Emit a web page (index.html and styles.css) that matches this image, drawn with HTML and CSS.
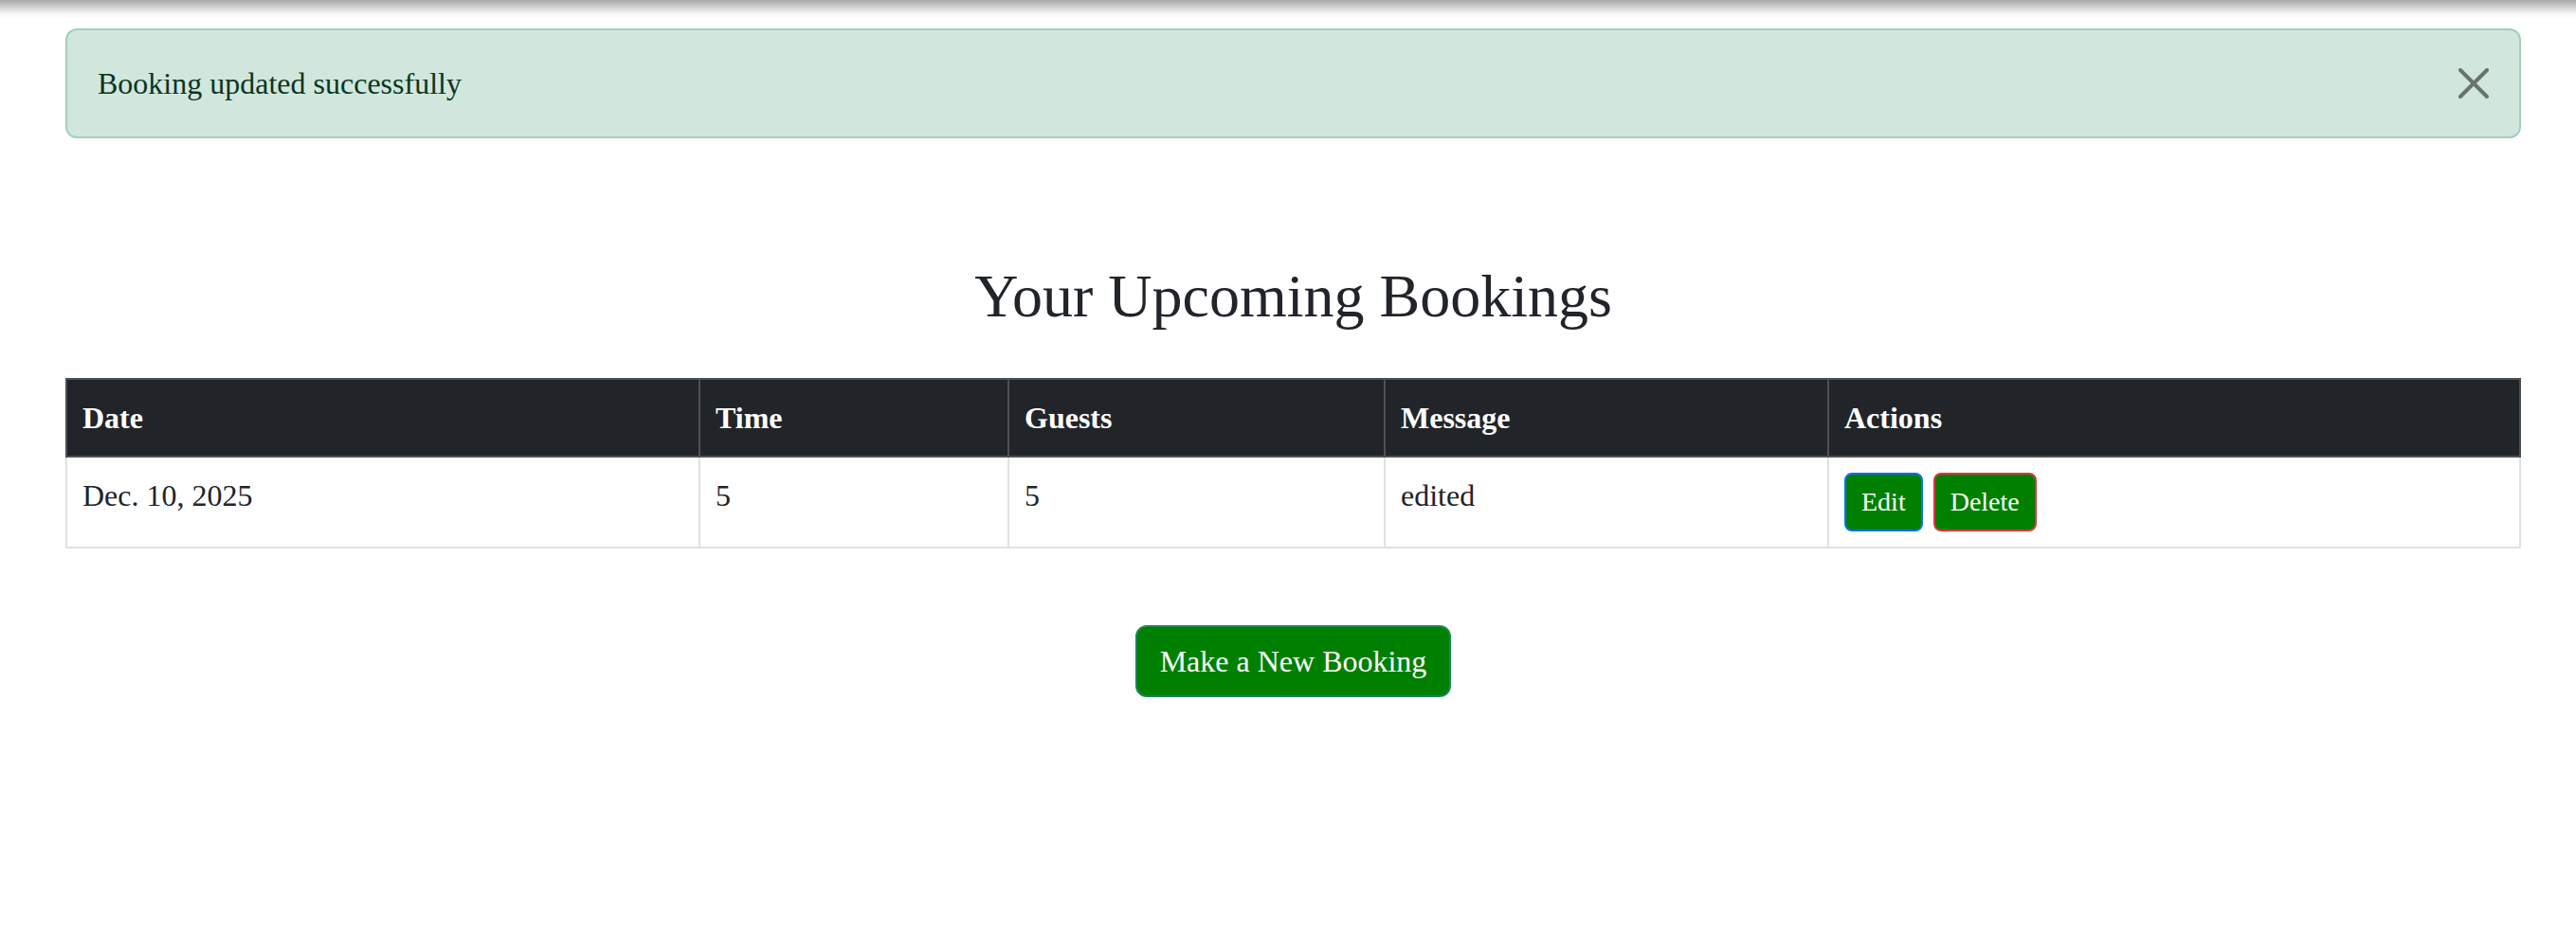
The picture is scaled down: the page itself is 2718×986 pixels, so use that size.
FILE: index.html
```html
<!DOCTYPE html>
<html lang="en">
<head>
<meta charset="utf-8">
<title>Your Upcoming Bookings</title>
<link rel="stylesheet" href="styles.css">
</head>
<body>
<main class="page">
  <div class="alert">
    <span class="alert-text">Booking updated successfully</span>
    <button class="btn-close" type="button" aria-label="Close">
      <svg viewBox="0 0 16 16" width="32" height="32"><path d="M1 1L15 15M15 1L1 15" stroke="currentColor" stroke-width="2" stroke-linecap="round" fill="none"/></svg>
    </button>
  </div>

  <h2 class="title">Your Upcoming Bookings</h2>

  <table class="bookings">
    <thead>
      <tr>
        <th class="col-date">Date</th>
        <th class="col-time">Time</th>
        <th class="col-guests">Guests</th>
        <th class="col-msg">Message</th>
        <th class="col-actions">Actions</th>
      </tr>
    </thead>
    <tbody>
      <tr>
        <td>Dec. 10, 2025</td>
        <td>5</td>
        <td>5</td>
        <td>edited</td>
        <td>
          <div class="actions">
            <a class="btn-sm btn-edit" href="#">Edit</a>
            <a class="btn-sm btn-delete" href="#">Delete</a>
          </div>
        </td>
      </tr>
    </tbody>
  </table>

  <div class="new-wrap">
    <a class="btn-new" href="#">Make a New Booking</a>
  </div>
</main>
</body>
</html>
```
FILE: styles.css
```css
html, body {
  margin: 0;
  padding: 0;
}
body {
  background: #fff linear-gradient(#a9a9a9, #f4f4f4 14px, #fff 20px) no-repeat top left / 100% 20px;
  font-family: "Liberation Serif", "Times New Roman", serif;
  color: #212529;
  min-height: 986px;
}
.page {
  padding: 30px 58px 0 69px;
}
.alert {
  position: relative;
  background: #d1e7dd;
  border: 2px solid #a3cfbb;
  border-radius: 12px;
  color: #0a3622;
  font-size: 32px;
  line-height: 48px;
  padding: 32px 96px 32px 32px;
}
.btn-close {
  position: absolute;
  top: 0;
  right: 0;
  width: 96px;
  height: 112px;
  padding: 40px 32px;
  border: 0;
  background: transparent;
  color: rgba(0, 0, 0, 0.5);
  display: flex;
  align-items: center;
  justify-content: center;
  box-sizing: border-box;
}
.btn-close svg {
  display: block;
  flex: none;
}
.title {
  margin: 129px 0 47px;
  font-size: 64px;
  font-weight: 500;
  line-height: 1.2;
  text-align: center;
}
.bookings {
  width: 100%;
  border-collapse: collapse;
  font-size: 32px;
  line-height: 48px;
  vertical-align: top;
  border: 2px solid #dee2e6;
}
.bookings th,
.bookings td {
  text-align: left;
  vertical-align: top;
  padding: 16px;
}
.bookings th {
  background: #212529;
  color: #fff;
  font-weight: bold;
  border: 2px solid #4d5154;
}
.bookings td {
  border: 2px solid #dee2e6;
  background: #fff;
}
.col-date { width: 634px; }
.col-time { width: 292px; }
.col-guests { width: 363px; }
.col-msg { width: 434px; }
.actions {
  display: flex;
  gap: 11px;
}
.btn-sm {
  display: block;
  background: #008000;
  color: #fff;
  text-decoration: none;
  font-size: 28px;
  line-height: 42px;
  padding: 8px 16px;
  border: 2px solid;
  border-radius: 8px;
}
.btn-edit { border-color: #0d6efd; }
.btn-delete { border-color: #dc3545; }
.new-wrap {
  display: flex;
  justify-content: center;
  margin-top: 81px;
}
.btn-new {
  display: block;
  background: #008000;
  color: #fff;
  text-decoration: none;
  font-size: 32px;
  line-height: 48px;
  padding: 12px 24px;
  border: 2px solid #198754;
  border-radius: 12px;
}
```
